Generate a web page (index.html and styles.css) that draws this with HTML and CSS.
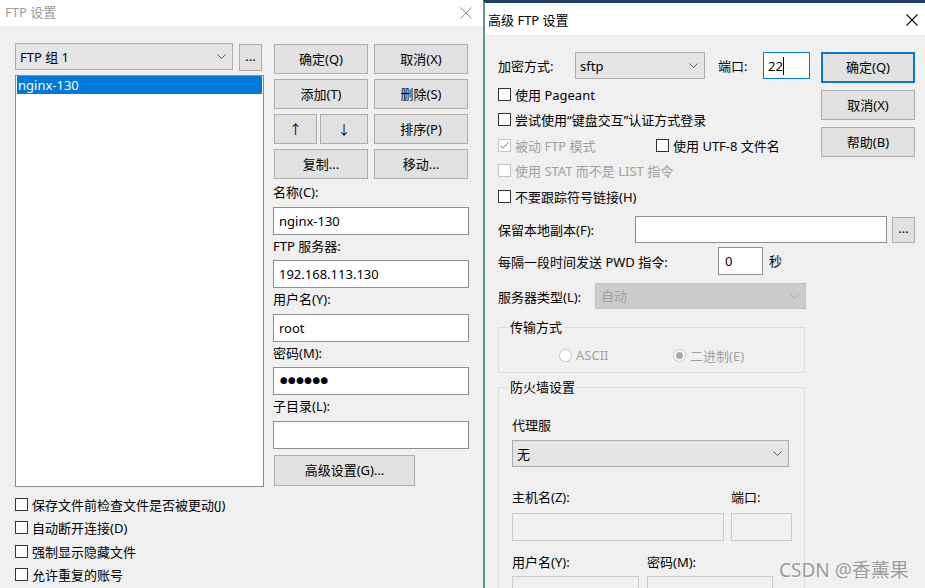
FILE: index.html
```html
<!DOCTYPE html>
<html lang="zh-CN">
<head>
<meta charset="utf-8">
<title>FTP 设置</title>
<link rel="stylesheet" href="styles.css">
</head>
<body>
<div class="desk">
  <section class="win win-main">
    <header class="titlebar tb-main">
      <span class="title">FTP 设置</span>
      <svg class="close" width="12" height="12" viewBox="0 0 12 12"><path d="M0.5 0.5 L11.5 11.5 M11.5 0.5 L0.5 11.5" stroke="#8a8a8a" stroke-width="1" fill="none"/></svg>
    </header>
    <div class="main-body">
      <div class="left-col">
        <div class="combo-row">
          <div class="combo combo-group"><span>FTP 组 1</span><svg width="9" height="5" viewBox="0 0 9 5"><path d="M0.5 0.5 L4.5 4.5 L8.5 0.5" stroke="#555" fill="none"/></svg></div>
          <div class="btn btn-dots">...</div>
        </div>
        <div class="listbox">
          <div class="item sel">nginx-130</div>
        </div>
      </div>
      <div class="right-col">
        <div class="btn-grid">
          <div class="btn">确定(Q)</div>
          <div class="btn">取消(X)</div>
          <div class="btn">添加(T)</div>
          <div class="btn">删除(S)</div>
          <div class="arrows"><div class="btn">↑</div><div class="btn">↓</div></div>
          <div class="btn">排序(P)</div>
          <div class="btn">复制...</div>
          <div class="btn">移动...</div>
        </div>
        <div class="lbl">名称(C):</div>
        <div class="input">nginx-130</div>
        <div class="lbl">FTP 服务器:</div>
        <div class="input">192.168.113.130</div>
        <div class="lbl">用户名(Y):</div>
        <div class="input">root</div>
        <div class="lbl">密码(M):</div>
        <div class="input pwd">●●●●●●</div>
        <div class="lbl">子目录(L):</div>
        <div class="input"></div>
        <div class="btn btn-adv">高级设置(G)...</div>
      </div>
      <div class="checks">
        <div class="cb"><span class="box"></span><span>保存文件前检查文件是否被更动(J)</span></div>
        <div class="cb"><span class="box"></span><span>自动断开连接(D)</span></div>
        <div class="cb"><span class="box"></span><span>强制显示隐藏文件</span></div>
        <div class="cb"><span class="box"></span><span>允许重复的账号</span></div>
      </div>
    </div>
  </section>

  <section class="win win-adv">
    <header class="titlebar tb-adv">
      <span class="title">高级 FTP 设置</span>
      <svg class="close" width="12" height="12" viewBox="0 0 12 12"><path d="M0.5 0.5 L11.5 11.5 M11.5 0.5 L0.5 11.5" stroke="#111" stroke-width="1.1" fill="none"/></svg>
    </header>
    <div class="adv-body">
      <div class="adv-top">
        <div class="adv-top-left">
          <div class="row1">
            <span class="lbl-enc">加密方式:</span>
            <div class="combo combo-enc"><span>sftp</span><svg width="9" height="5" viewBox="0 0 9 5"><path d="M0.5 0.5 L4.5 4.5 L8.5 0.5" stroke="#555" fill="none"/></svg></div>
            <span class="lbl-port">端口:</span>
            <div class="input input-port focus">22<span class="caret"></span></div>
          </div>
          <div class="cb-rows">
            <div class="cb2"><span class="box"></span><span>使用 Pageant</span></div>
            <div class="cb2"><span class="box"></span><span>尝试使用“键盘交互”认证方式登录</span></div>
            <div class="cb2">
              <div class="cb-pair dis"><span class="box"><svg width="11" height="11" viewBox="0 0 11 11"><path d="M1.5 5.5 L4 8 L9.5 2.5" stroke="#a8a8a8" stroke-width="1.2" fill="none"/></svg></span><span>被动 FTP 模式</span></div>
              <div class="cb-pair"><span class="box"></span><span>使用 UTF-8 文件名</span></div>
            </div>
            <div class="cb2 dis"><span class="box"></span><span>使用 STAT 而不是 LIST 指令</span></div>
            <div class="cb2"><span class="box"></span><span>不要跟踪符号链接(H)</span></div>
          </div>
        </div>
        <div class="btn-col">
          <div class="btn btn-default">确定(Q)</div>
          <div class="btn">取消(X)</div>
          <div class="btn">帮助(B)</div>
        </div>
      </div>
      <div class="row-local">
        <span class="lbl-local">保留本地副本(F):</span>
        <div class="input input-local"></div>
        <div class="btn btn-dots2">...</div>
      </div>
      <div class="row-pwd">
        <span class="lbl-pwd">每隔一段时间发送 PWD 指令:</span>
        <div class="input input-sec">0</div>
        <span class="sec">秒</span>
      </div>
      <div class="row-srv">
        <span class="lbl-srv">服务器类型(L):</span>
        <div class="combo combo-srv"><span>自动</span><svg width="9" height="5" viewBox="0 0 9 5"><path d="M0.5 0.5 L4.5 4.5 L8.5 0.5" stroke="#a6a6a6" fill="none"/></svg></div>
      </div>
      <fieldset class="group group-xfer">
        <legend>传输方式</legend>
        <div class="radios">
          <div class="radio r-ascii"><span class="circle"></span><span>ASCII</span></div>
          <div class="radio r-bin"><span class="circle on"></span><span>二进制(E)</span></div>
        </div>
      </fieldset>
      <fieldset class="group group-fw">
        <legend>防火墙设置</legend>
        <div class="fw-lbl">代理服</div>
        <div class="combo combo-proxy"><span>无</span><svg width="9" height="5" viewBox="0 0 9 5"><path d="M0.5 0.5 L4.5 4.5 L8.5 0.5" stroke="#555" fill="none"/></svg></div>
        <div class="fw-labels fw-l1"><span class="c-host">主机名(Z):</span><span>端口:</span></div>
        <div class="fw-inputs fw-i1"><div class="input dis-input w-host"></div><div class="input dis-input w-port"></div></div>
        <div class="fw-labels fw-l2"><span class="c-user">用户名(Y):</span><span>密码(M):</span></div>
        <div class="fw-inputs fw-i2"><div class="input dis-input w-user"></div><div class="input dis-input w-pass"></div></div>
      </fieldset>
    </div>
  </section>

  <div class="watermark">CSDN @香薰果</div>
</div>
</body>
</html>
```

FILE: styles.css
```css
html, body {
  margin: 0;
  padding: 0;
}
body {
  background: #f0f0f0;
  font-family: "Noto Sans", "Noto Sans CJK SC", sans-serif;
  font-size: 13px;
  color: #000;
}
.desk {
  position: relative;
  width: 925px;
  height: 588px;
  overflow: hidden;
}
.win {
  position: absolute;
  top: 0;
  height: 588px;
  box-sizing: border-box;
  background: #f0f0f0;
  display: flex;
  flex-direction: column;
}
.win-main {
  left: 0;
  width: 483px;
}
.win-adv {
  left: 483px;
  width: 442px;
  border-left: 2px solid #5c968f;
  border-top: 3px solid #1f3b68;
}
.titlebar {
  display: flex;
  align-items: center;
  background: #fff;
  flex: none;
}
.tb-main {
  height: 26px;
  padding-left: 5px;
}
.tb-main .title {
  color: #9a9a9a;
  line-height: 20px;
  margin-top: -2px;
}
.tb-main .close {
  margin-left: auto;
  margin-right: 11px;
  margin-top: -1px;
}
.tb-adv {
  height: 32px;
  padding-left: 3px;
}
.tb-adv .title {
  line-height: 20px;
  margin-top: 2px;
}
.tb-adv .close {
  margin-left: auto;
  margin-right: 7px;
  margin-top: 2px;
}

/* generic controls */
.btn {
  box-sizing: border-box;
  background: #e1e1e1;
  border: 1px solid #adadad;
  display: flex;
  align-items: center;
  justify-content: center;
  line-height: 18px;
  padding-bottom: 1px;
}
.input {
  box-sizing: border-box;
  background: #fff;
  border: 1px solid #8f8f8f;
  height: 28px;
  padding-left: 5px;
  display: flex;
  align-items: center;
  line-height: 18px;
}
.combo {
  box-sizing: border-box;
  background: #e5e5e5;
  border: 1px solid #adadad;
  display: flex;
  align-items: center;
  justify-content: space-between;
  padding: 0 6px 0 4px;
  line-height: 18px;
}
.box {
  box-sizing: border-box;
  width: 13px;
  height: 13px;
  border: 1px solid #333;
  background: #fff;
  flex: none;
  display: flex;
  align-items: center;
  justify-content: center;
}

/* main window */
.main-body {
  flex: 1;
  display: grid;
  grid-template-columns: 249px 196px;
  column-gap: 9px;
  align-content: start;
  padding: 17px 0 0 15px;
}
.combo-row {
  display: flex;
  gap: 6px;
  height: 28px;
  margin-bottom: 4px;
}
.combo-group {
  width: 218px;
  height: 27px;
}
.btn-dots {
  width: 23px;
  height: 27px;
  margin-top: 1px;
  padding-bottom: 4px;
}
.listbox {
  box-sizing: border-box;
  height: 412px;
  background: #fff;
  border: 1px solid #8a8a8a;
  padding: 0 1px;
}
.item {
  height: 18px;
  line-height: 18px;
  padding-left: 1px;
}
.item.sel {
  background: #0078d7;
  color: #fff;
}
.right-col {
  padding-top: 1px;
}
.btn-grid {
  display: grid;
  grid-template-columns: 94px 94px;
  grid-auto-rows: 30px;
  column-gap: 6px;
  row-gap: 5px;
  margin: 0 1px 2px;
}
.arrows {
  display: grid;
  grid-template-columns: 43px 48px;
  column-gap: 3px;
}
.lbl {
  height: 25.5px;
  line-height: 22px;
}
.pwd {
  font-family: "Noto Sans CJK SC", sans-serif;
  font-size: 7.5px;
  letter-spacing: 0.6px;
  padding-left: 6px;
}
.btn-adv {
  width: 141px;
  height: 31px;
  margin: 6px 0 0 1px;
}
.checks {
  grid-column: 1 / 3;
  margin-top: 6px;
}
.cb {
  height: 23.3px;
  display: flex;
  align-items: center;
  gap: 4px;
}

/* advanced window */
.adv-body {
  flex: 1;
  padding: 17px 0 0 13px;
}
.adv-top {
  display: flex;
}
.adv-top-left {
  width: 323px;
}
.row1 {
  display: flex;
  align-items: center;
  height: 27px;
}
.lbl-enc {
  width: 77px;
}
.combo-enc {
  width: 130px;
  height: 27px;
}
.lbl-port {
  width: 45px;
  margin-left: 13px;
}
.input-port {
  width: 47px;
  height: 27px;
  padding-left: 4px;
}
.focus {
  border-color: #0078d7;
}
.caret {
  display: inline-block;
  width: 1px;
  height: 18px;
  background: #000;
}
.cb-rows {
  margin-top: 2.5px;
}
.cb2 {
  height: 25.5px;
  display: flex;
  align-items: center;
  gap: 4px;
}
.cb-pair {
  display: flex;
  align-items: center;
  gap: 4px;
}
.cb-pair.dis {
  width: 154px;
}
.dis {
  color: #a0a0a0;
}
.dis .box {
  border-color: #c4c4c4;
}
.btn-col {
  width: 94px;
  display: flex;
  flex-direction: column;
  gap: 7px;
}
.btn-col .btn {
  height: 30px;
}
.btn-col .btn-default {
  height: 31px;
  border: 2px solid #0078d7;
}
.row-local {
  display: flex;
  align-items: center;
  height: 27px;
  margin-top: 7px;
}
.lbl-local {
  width: 137px;
}
.input-local {
  width: 252px;
  height: 27px;
}
.btn-dots2 {
  width: 23px;
  height: 26px;
  margin: 1px 0 0 5px;
  padding-bottom: 4px;
}
.row-pwd {
  display: flex;
  align-items: center;
  height: 28px;
  margin-top: 4px;
}
.lbl-pwd {
  width: 220px;
}
.input-sec {
  width: 45px;
  padding-left: 6px;
}
.sec {
  margin-left: 6px;
  margin-top: -2px;
}
.row-srv {
  display: flex;
  align-items: center;
  height: 26px;
  margin-top: 8px;
}
.lbl-srv {
  width: 97px;
}
.combo-srv {
  width: 211px;
  height: 26px;
  background: #cccccc;
  border-color: #c2c2c2;
  color: #a0a0a0;
  padding-left: 5px;
}
.group {
  box-sizing: border-box;
  width: 307px;
  margin: 0;
  border: 1px solid #dcdcdc;
  padding: 0 0 0 13px;
  min-width: 0;
}
.group legend {
  padding: 0 2px;
  margin-left: -4px;
  line-height: 18px;
  height: 18px;
}
.group-xfer {
  margin-top: 9px;
  padding-top: 9px;
  padding-bottom: 7px;
}
.radios {
  display: flex;
  height: 20px;
  align-items: center;
  color: #a0a0a0;
}
.radio {
  display: flex;
  align-items: center;
  gap: 4px;
}
.r-ascii {
  margin-left: 47px;
  width: 114px;
}
.circle {
  box-sizing: border-box;
  width: 13px;
  height: 13px;
  border-radius: 50%;
  border: 1px solid #c4c4c4;
  background: #fff;
  display: flex;
  align-items: center;
  justify-content: center;
}
.circle.on::after {
  content: "";
  width: 7px;
  height: 7px;
  border-radius: 50%;
  background: #a8a8a8;
}
.group-fw {
  margin-top: 5px;
  padding-top: 19px;
  padding-bottom: 20px;
}
.fw-lbl {
  height: 20px;
  line-height: 20px;
}
.combo-proxy {
  width: 277px;
  height: 27px;
  margin-top: 5px;
}
.fw-labels {
  display: flex;
  height: 20px;
  line-height: 20px;
}
.fw-l1 {
  margin-top: 20px;
}
.fw-l2 {
  margin-top: 11px;
}
.c-host {
  width: 219px;
}
.c-user {
  width: 135px;
}
.fw-inputs {
  display: flex;
}
.fw-i1 {
  margin-top: 6px;
  gap: 7px;
}
.fw-i2 {
  margin-top: 4px;
  gap: 8px;
}
.dis-input {
  background: #f0f0f0;
  border-color: #cccccc;
}
.w-host { width: 212px; }
.w-port { width: 61px; }
.w-user { width: 127px; }
.w-pass { width: 126px; }

.watermark {
  position: absolute;
  left: 779px;
  top: 557px;
  font-family: "Noto Sans", "Noto Sans CJK SC", sans-serif;
  font-size: 19px;
  line-height: 26px;
  color: #9b9b9b;
  text-shadow: 0 0 2px #fff;
  white-space: nowrap;
}
```
